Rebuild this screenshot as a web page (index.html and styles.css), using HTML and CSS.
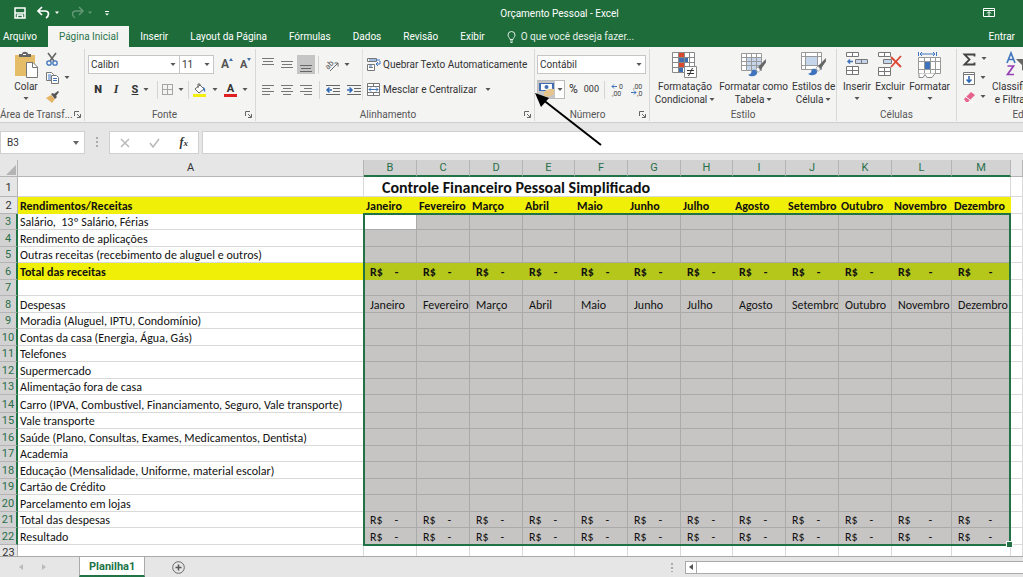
FILE: index.html
```html
<!DOCTYPE html>
<html lang="pt-BR">
<head>
<meta charset="utf-8">
<title>Orçamento Pessoal - Excel</title>
<link rel="stylesheet" href="styles.css">
</head>
<body>
<svg class="sprite" aria-hidden="true">
  <symbol id="down" viewBox="0 0 6 4"><path d="M.5 0h5L3 3z" fill="#555"/></symbol>
  <symbol id="launch" viewBox="0 0 7 7"><path d="M.5 5V.5H5M3 3l3 3M6.5 3v3.5H3" fill="none" stroke="#666"/></symbol>
  <symbol id="brush" viewBox="0 0 18 18"><path d="M17 1 10 8l2 3 5-7z" fill="#666"/><path d="M10 8 8 10l2 3 2-2z" fill="#fff" stroke="#888" stroke-width=".6"/><path d="M1 15q3 0 3-3c1-3 6-1 5 2-1 3-6 3-8 1z" fill="#3f74bd"/></symbol>
</svg>

<header class="titlebar">
  <div class="quick">
    <button aria-label="Salvar"><svg width="12" height="12" viewBox="0 0 12 12"><path d="M1 1h10v10H1zM1 6h10M3.500 11V8h5v3" fill="none" stroke="#fff" stroke-width="1.500"/></svg></button>
    <button aria-label="Desfazer"><svg width="13" height="12" viewBox="0 0 13 12"><path d="M5 0 1 4l4 4M1.500 4H8c5 0 4 5 1 7" fill="none" stroke="#fff" stroke-width="1.700"/></svg><svg width="6" height="4" viewBox="0 0 6 4"><path d="M1 .5h4L3 3z" fill="#fff"/></svg></button>
    <button aria-label="Refazer" class="faded"><svg width="13" height="12" viewBox="0 0 13 12"><path d="m8 0 4 4-4 4M11.500 4H5C0 4 1 9 4 11" fill="none" stroke="#fff" stroke-width="1.500"/></svg><svg width="6" height="4" viewBox="0 0 6 4"><path d="M1 .5h4L3 3z" fill="#fff"/></svg></button>
    <button aria-label="Personalizar"><svg width="6" height="7" viewBox="0 0 6 7"><path d="M1 1.500h4" stroke="#fff"/><path d="M1 3.500h4l-2 2z" fill="#fff"/></svg></button>
  </div>
  <h1>Orçamento Pessoal - Excel</h1>
  <button class="display" aria-label="Opções de exibição"><svg width="12" height="10" viewBox="0 0 12 10"><path d="M.5.5h11v8H.5zM.5 2.500h11M6 8V4M4 5.500l2-2 2 2" fill="none" stroke="#fff"/></svg></button>
</header>

<nav class="tabs">
  <button class="file">Arquivo</button>
  <button class="active">Página Inicial</button>
  <button>Inserir</button>
  <button>Layout da Página</button>
  <button>Fórmulas</button>
  <button>Dados</button>
  <button>Revisão</button>
  <button>Exibir</button>
  <button class="tell"><svg width="9" height="12" viewBox="0 0 9 12"><path d="M3 8.500C3 7 1 6 1 4a3.500 3.500 0 0 1 7 0c0 2-2 3-2 4.500zM3 10h3M3.500 11.500h2" fill="none" stroke="#dcebe1"/></svg>O que você deseja fazer...</button>
  <button class="enter">Entrar</button>
</nav>

<section class="ribbon">
  <div class="group clipboard">
    <div class="body">
      <button class="big">
        <svg width="24" height="26" viewBox="0 0 24 26"><path d="M1 3h20v21H1z" fill="#e5bd69"/><path d="M5 5V2h3c0-3 6-3 6 0h3v3z" fill="#666"/><path d="M9 2h3v1H9z" fill="#fff"/><path d="M12.500 10.500H19l4.500 4.500v10.500h-11z" fill="#fff" stroke="#777"/><path d="M18.500 10.500v5h5" fill="none" stroke="#777"/></svg>
        <span>Colar</span><svg class="d"><use href="#down"/></svg>
      </button>
      <div class="stack">
        <button aria-label="Recortar"><svg width="12" height="13" viewBox="0 0 12 13"><path d="m2 0 6 8M10 0 4 8" stroke="#666" stroke-width="1.600"/><g fill="none" stroke="#3f74bd" stroke-width="1.300"><circle cx="3" cy="10" r="2.200"/><circle cx="9" cy="10" r="2.200"/></g></svg></button>
        <button aria-label="Copiar"><svg width="13" height="12" viewBox="0 0 13 12"><path d="M.5.500h5l2 2v6h-7z" fill="#fff" stroke="#777"/><path d="M2 3h3M2 5h3M2 7h3" stroke="#3f74bd"/><path d="M5.500 3.500h5l2 2v6h-7z" fill="#fff" stroke="#777"/><path d="M7 6.500h4M7 8.500h4" stroke="#3f74bd"/></svg><svg class="d"><use href="#down"/></svg></button>
        <button aria-label="Pincel"><svg width="13" height="12" viewBox="0 0 13 12"><path d="m0 7 5-3 4 4-3 4z" fill="#e5b566"/><path d="m5 3 2-1 4 4-2 2zM8 3l4-3 1 1-3 4z" fill="#555"/></svg></button>
      </div>
    </div>
    <footer><span>Área de Transf...</span><button aria-label="Mais: área de transferência"><svg width="7" height="7"><use href="#launch"/></svg></button></footer>
  </div>

  <div class="group font">
    <div class="body rows">
      <div class="row">
        <label class="combo name"><input aria-label="Fonte" value="Calibri"><svg class="d"><use href="#down"/></svg></label>
        <label class="combo size"><input aria-label="Tamanho" value="11"><svg class="d"><use href="#down"/></svg></label>
        <button class="grow" aria-label="Aumentar fonte"><b>A</b><svg width="4" height="3" viewBox="0 0 4 3"><path d="M0 3h4L2 0z" fill="#3f6fae"/></svg></button>
        <button class="grow less" aria-label="Diminuir fonte"><b>A</b><svg width="4" height="3" viewBox="0 0 4 3"><path d="M0 0h4L2 3z" fill="#3f6fae"/></svg></button>
      </div>
      <div class="row format">
        <button class="glyph"><b>N</b></button>
        <button class="glyph"><i>I</i></button>
        <button class="glyph"><u>S</u><svg class="d"><use href="#down"/></svg></button>
        <span class="sep"></span>
        <button aria-label="Bordas"><svg width="11" height="11" viewBox="0 0 11 11"><path d="M.5 0v11M5.500 0v11M10.500 0v11M0 .5h11M0 5.500h11M0 10.500h11" stroke="#a5a5a5"/></svg><svg class="d"><use href="#down"/></svg></button>
        <span class="sep"></span>
        <button aria-label="Cor de preenchimento"><svg width="14" height="14" viewBox="0 0 14 14"><path d="m2 6 5-4 4 4-5 4z" fill="#fff" stroke="#666"/><path d="M5 5V1h2v2" fill="none" stroke="#666"/><path d="M10 4q3 1 2 5-2-1-2-5" fill="#3f74bd"/><path d="M0 11h13v3H0z" fill="#f5ef10"/></svg><svg class="d"><use href="#down"/></svg></button>
        <button class="color" aria-label="Cor da fonte"><b>A</b><svg class="d"><use href="#down"/></svg></button>
      </div>
    </div>
    <footer><span>Fonte</span><button aria-label="Mais: fonte"><svg width="7" height="7"><use href="#launch"/></svg></button></footer>
  </div>

  <div class="group align">
    <div class="body">
      <div class="rows left">
        <div class="row">
          <button aria-label="Em cima"><svg width="12" height="14" viewBox="0 0 12 14"><path d="M0 .5h12M1 3.500h10M0 6.500h12" stroke="#777"/></svg></button>
          <button aria-label="No meio"><svg width="12" height="14" viewBox="0 0 12 14"><path d="M0 3.500h12M1 6.500h10M0 9.500h12" stroke="#777"/></svg></button>
          <button class="on" aria-label="Embaixo"><svg width="12" height="14" viewBox="0 0 12 14"><path d="M0 7.500h12M1 10.500h10M0 13.500h12" stroke="#666"/></svg></button>
          <span class="sep"></span>
          <button aria-label="Orientação"><svg width="15" height="14" viewBox="0 0 15 14"><text x="0" y="9" transform="rotate(-45 5 7)" class="ab">ab</text><path d="m5 13 8-8M9.500 5H13v3.500" fill="none" stroke="#666"/></svg><svg class="d"><use href="#down"/></svg></button>
        </div>
        <div class="row">
          <button aria-label="À esquerda"><svg width="12" height="12" viewBox="0 0 12 12"><path d="M0 1.500h12M0 4.500h8M0 7.500h12M0 10.500h8" stroke="#777"/></svg></button>
          <button aria-label="Centro"><svg width="12" height="12" viewBox="0 0 12 12"><path d="M0 1.500h12M2 4.500h8M0 7.500h12M2 10.500h8" stroke="#777"/></svg></button>
          <button aria-label="À direita"><svg width="12" height="12" viewBox="0 0 12 12"><path d="M0 1.500h12M4 4.500h8M0 7.500h12M4 10.500h8" stroke="#777"/></svg></button>
          <span class="sep"></span>
          <button aria-label="Diminuir recuo"><svg width="14" height="12" viewBox="0 0 14 12"><path d="M0 1.500h14M7 4.500h7M7 7.500h7M0 10.500h14" stroke="#666"/><path d="M6 6H1M3.500 3.500 1 6l2.500 2.500" fill="none" stroke="#2f68b5" stroke-width="1.500"/></svg></button>
          <button aria-label="Aumentar recuo"><svg width="14" height="12" viewBox="0 0 14 12"><path d="M0 1.500h14M7 4.500h7M7 7.500h7M0 10.500h14" stroke="#666"/><path d="M0 6h5M2.500 3.500 5 6 2.500 8.500" fill="none" stroke="#2f68b5" stroke-width="1.500"/></svg></button>
        </div>
      </div>
      <div class="rows right">
        <div class="row"><button><svg width="14" height="13" viewBox="0 0 14 13"><path d="M.5.5h9v3h-9zM.5 6.500h7v6h-7zM2 9.500h4" fill="#fff" stroke="#777"/><path d="M2 2h11M2 8h3" stroke="#3f74bd"/><path d="M13 3v3H9M11 4 9 6l2 2" fill="none" stroke="#3f74bd"/></svg>Quebrar Texto Automaticamente</button></div>
        <div class="row"><button><svg width="14" height="13" viewBox="0 0 14 13"><path d="M.5.5h12v12H.5zM.5 3.500h12M.5 9.500h12M6.500.5v3M6.500 9.500v3" fill="#fff" stroke="#777"/><path d="M2 6.500h9M4 4.500l-2 2 2 2M9 4.500l2 2-2 2" fill="none" stroke="#3f74bd"/></svg>Mesclar e Centralizar<svg class="d far"><use href="#down"/></svg></button></div>
      </div>
    </div>
    <footer><span>Alinhamento</span><button aria-label="Mais: alinhamento"><svg width="7" height="7"><use href="#launch"/></svg></button></footer>
  </div>

  <div class="group number">
    <div class="body rows">
      <div class="row"><label class="combo"><input aria-label="Formato de número" value="Contábil"><svg class="d"><use href="#down"/></svg></label></div>
      <div class="row">
        <button class="money" aria-label="Formato contábil"><svg width="17" height="17" viewBox="0 0 17 17"><path d="M0 0h17v17H0z" fill="#c5c5c5"/><path d="M1 2h15v8H1z" fill="#3f6fb0"/><path d="M3 3h11v6H3z" fill="#fff"/><circle cx="8.500" cy="6" r="2" fill="#3f6fb0"/><path d="M6 11q4-4 10-3v5q-5 4-10 2z" fill="#e5c58d"/></svg><svg class="d"><use href="#down"/></svg></button>
        <button class="pct">%</button>
        <button class="zeros">000</button>
        <span class="sep"></span>
        <button aria-label="Aumentar casas"><svg width="13" height="13" viewBox="0 0 13 13"><path d="M6 3.500H1M3 1.500l-2 2 2 2" fill="none" stroke="#3f74bd"/><text x="8" y="6" class="dig">0</text><text x="1" y="13" class="dig">,00</text></svg></button>
        <button aria-label="Diminuir casas"><svg width="13" height="13" viewBox="0 0 13 13"><path d="M0 9.500h5M3 7.500l2 2-2 2" fill="none" stroke="#3f74bd"/><text x="2" y="6" class="dig">,00</text><text x="6" y="13" class="dig">,0</text></svg></button>
      </div>
    </div>
    <footer><span>Número</span><button aria-label="Mais: número"><svg width="7" height="7"><use href="#launch"/></svg></button></footer>
  </div>

  <div class="group style">
    <div class="body">
      <button class="big"><svg width="26" height="26" viewBox="0 0 26 26"><path d="M.5.5h22v20H.5z" fill="#fff"/><path d="M7 1h5v4H7zM7 11h5v4H7z" fill="#d9482b"/><path d="M7 6h9v4H7zM7 16h4v4H7z" fill="#3f6fb0"/><path d="M.5.5h22v20H.5zM.5 5.500h22M.5 10.500h22M.5 15.500h22M6.500.5v20M12.500.5v20M17.500.5v20" fill="none" stroke="#888"/><path d="M12.500 14.500h12v11h-12z" fill="#fff" stroke="#888"/><path d="M15 18.500h7M15 21.500h7M20.500 16l-4 8" stroke="#333"/></svg><span>Formatação<br>Condicional<svg class="d"><use href="#down"/></svg></span></button>
      <button class="big"><svg width="26" height="26" viewBox="0 0 26 26"><path d="M.5 1.500h20v17H.5z" fill="#fff"/><path d="M5 6h15v12H5z" fill="#c5d5eb"/><path d="M.5 1.500h20v17H.5zM.5 5.500h20M.5 9.500h20M.5 13.500h20M5.500 1.500v17M10.500 1.500v17M15.500 1.500v17" fill="none" stroke="#999"/><use href="#brush" x="6" y="6" width="20" height="20"/></svg><span>Formatar como<br>Tabela<svg class="d"><use href="#down"/></svg></span></button>
      <button class="big"><svg width="26" height="26" viewBox="0 0 26 26"><path d="M.5.5h20v17H.5zM.5 4.500h20M.5 13.500h20M4.500.5v17M16.500.5v17" fill="#fff" stroke="#999"/><path d="M5 5h11v8H5z" fill="#c5d5eb"/><use href="#brush" x="6" y="5" width="20" height="20"/></svg><span>Estilos de<br>Célula<svg class="d"><use href="#down"/></svg></span></button>
    </div>
    <footer><span>Estilo</span></footer>
  </div>

  <div class="group cells">
    <div class="body">
      <button class="big"><svg width="22" height="26" viewBox="0 0 22 26"><path d="M.5.5h12v4H.5zM6.500.5v4M.5 14.500h12v8H.5zM.5 18.500h12M6.500 14.500v8" fill="#fff" stroke="#777"/><path d="M9.500 7.500h12v4h-12zM15.500 7.500v4" fill="#c5d5eb" stroke="#777"/><path d="M7 9.500H2M4 7.500l-2 2 2 2" fill="none" stroke="#3f74bd" stroke-width="1.500"/></svg><span>Inserir</span><svg class="d"><use href="#down"/></svg></button>
      <button class="big"><svg width="24" height="26" viewBox="0 0 24 26"><path d="M.5.500h12v4H.5zM6.500.5v4M.5 15.500h12v8H.5zM.5 19.500h12M6.500 15.500v8" fill="#fff" stroke="#777"/><path d="M5.500 7.500h8v4h-8z" fill="#c5d5eb" stroke="#777"/><path d="m13 5 10 10M23 4 13 15" stroke="#dc4632" stroke-width="1.800"/></svg><span>Excluir</span><svg class="d"><use href="#down"/></svg></button>
      <button class="big"><svg width="24" height="26" viewBox="0 0 24 26"><path d="M.5 0v4M18.500 0v4M2 2h15M4 0 2 2l2 2M15 0l2 2-2 2" fill="none" stroke="#3f74bd"/><path d="M.5 5.500h22v16H.5zM.5 9.500h22M.5 17.500h22M6.500 5.500v16M12.500 5.500v16M17.500 5.500v16" fill="#fff" stroke="#999"/><path d="M7 10h5v7H7z" fill="#3f74bd"/><path d="M1 21.500v4h4l2-3 2 3h5l3-4" fill="#fff" stroke="#888"/></svg><span>Formatar</span><svg class="d"><use href="#down"/></svg></button>
    </div>
    <footer><span>Células</span></footer>
  </div>

  <div class="group edit">
    <div class="body">
      <div class="stack">
        <button aria-label="Soma"><svg width="13" height="13" viewBox="0 0 13 13"><path d="M11.500 3.500V1.500H1.500l5 5-5 5h10V9.500" fill="none" stroke="#444" stroke-width="1.800"/></svg><svg class="d"><use href="#down"/></svg></button>
        <button aria-label="Preencher"><svg width="12" height="13" viewBox="0 0 12 13"><path d="M.5.5h11v12H.5zM.5 2.500h11" fill="#fff" stroke="#777"/><path d="M6 4v6M3.500 7.500 6 10l2.500-2.500" fill="none" stroke="#2f68b5" stroke-width="1.600"/></svg><svg class="d"><use href="#down"/></svg></button>
        <button aria-label="Limpar"><svg width="12" height="12" viewBox="0 0 12 12"><path d="m1 8 7-7 4 3-7 7H3z" fill="#e8638c"/><path d="m3 6 4 3M4 11.500h7" stroke="#fff"/></svg><svg class="d"><use href="#down"/></svg></button>
      </div>
      <button class="big"><svg width="36" height="26" viewBox="0 0 36 26"><path d="m10 11 4-10 4 10M11.500 7.500h5" fill="none" stroke="#3f74bd" stroke-width="1.600"/><path d="M10.500 14h6l-6 8.500H17" fill="none" stroke="#9440b4" stroke-width="1.700"/><path d="M19 7h16l-6 6v7l-4-2v-5z" fill="#666"/></svg><span>Classificar<br>e Filtrar<svg class="d"><use href="#down"/></svg></span></button>
    </div>
    <footer><span>Edição</span></footer>
  </div>
</section>

<section class="formula">
  <label class="cellname"><input aria-label="Caixa de nome" value="B3"><svg width="6" height="4" viewBox="0 0 6 4"><path d="M0 0h6L3 4z" fill="#666"/></svg></label>
  <span class="grip"></span>
  <div class="fx">
    <button aria-label="Cancelar"><svg width="10" height="10" viewBox="0 0 10 10"><path d="m1 1 8 8M9 1 1 9" stroke="#b9b9b9" stroke-width="1.500"/></svg></button>
    <button aria-label="Inserir"><svg width="11" height="10" viewBox="0 0 11 10"><path d="m1 5 3 4 6-8" fill="none" stroke="#b9b9b9" stroke-width="1.600"/></svg></button>
    <button class="fn"><i>f</i><i>x</i></button>
  </div>
  <input class="entry" aria-label="Barra de fórmulas">
</section>

<main class="sheet">
  <table>
    <colgroup><col class="num"><col class="wide"><col span="3" class="m"><col class="s"><col span="2" class="m"><col class="s"><col span="3" class="m"><col class="l"><col class="m last"><col></colgroup>
    <thead><tr><th class="corner"><svg width="10" height="10" viewBox="0 0 10 10"><path d="M10 0v10H0z" fill="#b4b4b4"/></svg></th><th class="plain">A</th><th>B<th>C<th>D<th>E<th>F<th>G<th>H<th>I<th>J<th>K<th>L<th>M<th class="plain"></tr></thead>
    <tbody>
      <tr class="title"><th>1<td><td colspan="12"><span>Controle Financeiro Pessoal Simplificado</span><td></tr>
      <tr class="yellow head"><th>2<td>Rendimentos/Receitas<td>Janeiro<td>Fevereiro<td>Março<td>Abril<td>Maio<td>Junho<td>Julho<td>Agosto<td>Setembro<td>Outubro<td>Novembro<td>Dezembro<td></tr>
    </tbody>
    <tbody class="sel">
      <tr><th>3<td>Salário,&nbsp; 13º Salário, Férias
        <td class="cursor"><td><td> <td><td><td> <td><td><td> <td><td><td> <td></tr>
      <tr><th>4<td>Rendimento de aplicações
        <td><td><td> <td><td><td> <td><td><td> <td><td><td> <td></tr>
      <tr><th>5<td>Outras receitas (recebimento de aluguel e outros)
        <td><td><td> <td><td><td> <td><td><td> <td><td><td> <td></tr>
      <tr class="yellow cash"><th>6<td>Total das receitas<td>R$<s>-</s><td>R$<s>-</s><td>R$<s>-</s><td>R$<s>-</s><td>R$<s>-</s><td>R$<s>-</s><td>R$<s>-</s><td>R$<s>-</s><td>R$<s>-</s><td>R$<s>-</s><td>R$<s>-</s><td>R$<s>-</s><td></tr>
      <tr><th>7<td>
        <td><td><td> <td><td><td> <td><td><td> <td><td><td> <td></tr>
      <tr><th>8<td>Despesas<td>Janeiro<td>Fevereiro<td>Março<td>Abril<td>Maio<td>Junho<td>Julho<td>Agosto<td>Setembro<td>Outubro<td>Novembro<td>Dezembro<td></tr>
      <tr><th>9<td>Moradia (Aluguel, IPTU, Condomínio)
        <td><td><td> <td><td><td> <td><td><td> <td><td><td> <td></tr>
      <tr><th>10<td>Contas da casa (Energia, Água, Gás)
        <td><td><td> <td><td><td> <td><td><td> <td><td><td> <td></tr>
      <tr><th>11<td>Telefones
        <td><td><td> <td><td><td> <td><td><td> <td><td><td> <td></tr>
      <tr><th>12<td>Supermercado
        <td><td><td> <td><td><td> <td><td><td> <td><td><td> <td></tr>
      <tr><th>13<td>Alimentação fora de casa
        <td><td><td> <td><td><td> <td><td><td> <td><td><td> <td></tr>
      <tr class="tall"><th>14<td>Carro (IPVA, Combustível, Financiamento, Seguro, Vale transporte)
        <td><td><td> <td><td><td> <td><td><td> <td><td><td> <td></tr>
      <tr><th>15<td>Vale transporte
        <td><td><td> <td><td><td> <td><td><td> <td><td><td> <td></tr>
      <tr><th>16<td>Saúde (Plano, Consultas, Exames, Medicamentos, Dentista)
        <td><td><td> <td><td><td> <td><td><td> <td><td><td> <td></tr>
      <tr><th>17<td>Academia
        <td><td><td> <td><td><td> <td><td><td> <td><td><td> <td></tr>
      <tr><th>18<td>Educação (Mensalidade, Uniforme, material escolar)
        <td><td><td> <td><td><td> <td><td><td> <td><td><td> <td></tr>
      <tr><th>19<td>Cartão de Crédito
        <td><td><td> <td><td><td> <td><td><td> <td><td><td> <td></tr>
      <tr><th>20<td>Parcelamento em lojas
        <td><td><td> <td><td><td> <td><td><td> <td><td><td> <td></tr>
      <tr class="cash"><th>21<td>Total das despesas<td>R$<s>-</s><td>R$<s>-</s><td>R$<s>-</s><td>R$<s>-</s><td>R$<s>-</s><td>R$<s>-</s><td>R$<s>-</s><td>R$<s>-</s><td>R$<s>-</s><td>R$<s>-</s><td>R$<s>-</s><td>R$<s>-</s><td></tr>
      <tr class="cash"><th>22<td>Resultado<td>R$<s>-</s><td>R$<s>-</s><td>R$<s>-</s><td>R$<s>-</s><td>R$<s>-</s><td>R$<s>-</s><td>R$<s>-</s><td>R$<s>-</s><td>R$<s>-</s><td>R$<s>-</s><td>R$<s>-</s><td>R$<s>-</s><td></tr>
    </tbody>
    <tbody><tr><th>23<td>
        <td><td><td> <td><td><td> <td><td><td> <td><td><td> <td></tr></tbody>
  </table>
  <div class="selection"></div>
</main>

<footer class="bottom">
  <div class="arrows"><button aria-label="Anterior"><svg width="4" height="6" viewBox="0 0 4 6"><path d="M4 0v6L0 3z" fill="#bbb"/></svg></button><button aria-label="Próxima"><svg width="4" height="6" viewBox="0 0 4 6"><path d="M0 0v6l4-3z" fill="#bbb"/></svg></button></div>
  <button class="sheettab">Planilha1</button>
  <button class="add" aria-label="Nova planilha"><svg width="13" height="13" viewBox="0 0 13 13"><circle cx="6.500" cy="6.500" r="5.800" fill="none" stroke="#666"/><path d="M6.500 3.500v6M3.500 6.500h6" stroke="#555" stroke-width="1.500"/></svg></button>
  <div class="hscroll"><span class="grip"></span><button aria-label="Rolar à esquerda"><svg width="4" height="6" viewBox="0 0 4 6"><path d="M4 0v6L0 3z" fill="#555"/></svg></button><span class="track"></span></div>
</footer>

<svg class="pointer" width="70" height="56" viewBox="0 0 70 56" aria-hidden="true"><path d="M8 6 67 52" stroke="#000" stroke-width="2"/><path d="m1 0 14 5-8 9z"/></svg>
</body>
</html>
```
FILE: styles.css
```css
* { box-sizing: border-box; }
body { margin: 0; height: 100vh; overflow: hidden; display: flex; flex-direction: column; position: relative; background: #e6e6e6; color: #333; font: 10px/13px Roboto, "Open Sans", sans-serif; }
button, input { font: inherit; color: inherit; background: none; border: 0; padding: 0; margin: 0; }
button { display: flex; align-items: center; white-space: nowrap; }
svg { flex: none; display: block; overflow: visible; }
.sprite { position: absolute; width: 0; height: 0; }
.d { width: 6px; height: 4px; }

.titlebar { flex: none; height: 26px; background: #1e6c3a; color: #fff; display: grid; grid-template-columns: 1fr auto 1fr; align-items: center; padding: 0 28px 0 14px; }
.titlebar h1 { margin: 0; font-size: 10px; font-weight: 400; padding-left: 110px; }
.quick { display: flex; gap: 11px; height: 19px; align-items: center; }
.quick button { gap: 3px; }
.quick button:nth-child(2) { gap: 4px; }
.quick .faded { opacity: .3; }
.display { justify-self: end; height: 19px; }

.tabs { flex: none; height: 21px; background: #1e6c3a; color: #fff; display: flex; }
.tabs button { padding: 0 11px; }
.tabs .file { padding: 0 11px 0 3px; }
.tabs .active { background: #f4f4f3; color: #2b7549; }
.tabs .tell { gap: 5px; color: #e4f0e8; }
.tabs .enter { margin-left: auto; padding-right: 8px; }

.ribbon { flex: none; height: 76px; background: #f4f4f3; border-bottom: 1px solid #cfcfcf; display: flex; overflow: hidden; }
.group { flex: none; display: flex; flex-direction: column; margin: 2px 0 1px; border-right: 1px solid #d8d8d8; }
.body { height: 58px; display: flex; }
.group footer { flex: 1; display: flex; justify-content: center; align-items: center; position: relative; color: #555; white-space: nowrap; padding: 2px 14px 0 0; }
.group footer span:last-child { padding-left: 14px; }
.group footer button { position: absolute; right: 3px; top: 5px; }
.rows { display: flex; flex-direction: column; gap: 6px; padding-top: 6px; }
.row { display: flex; align-items: center; height: 19px; }
.sep { width: 1px; height: 18px; background: #d5d5d5; }
.big { flex-direction: column; text-align: center; padding-top: 3px; gap: 2px; }
.big .d { margin: 2px auto 0; }
.big span .d { display: inline-block; vertical-align: middle; margin: 0 0 0 2px; }
.stack { display: flex; flex-direction: column; justify-content: space-between; padding: 3px 0 2px; }
.stack button { gap: 5px; height: 14px; }
.combo { display: flex; align-items: center; height: 19px; background: #fff; border: 1px solid #c6c6c6; padding: 0 3px 0 2px; }
.combo input { flex: 1; width: 0; min-width: 0; }

.clipboard { width: 85px; }
.clipboard .big { padding-left: 14px; }
.clipboard .stack { padding-left: 8px; }
.clipboard footer { justify-content: flex-start; }
.font { width: 171px; padding-left: 3px; }
.font .name { width: 92px; }
.font .size { width: 35px; margin-left: -1px; }
.grow { margin-left: 7px; align-items: flex-start; font-size: 12px; color: #555; }
.less { font-size: 11px; }
.format { padding-left: 4px; gap: 6px; }
.format .sep { margin: 0 -2px; }
.format button { gap: 5px; }
.format .glyph { width: 12px; justify-content: center; font-size: 11px; color: #333; font-weight: 700; }
.format .glyph:nth-child(3) { width: 25px; }
.glyph i { font-family: "Liberation Serif", serif; font-size: 12px; }
.color b { width: 13px; font-size: 11px; border-bottom: 3px solid #e02020; line-height: 11px; }
.align { width: 279px; }
.left { width: 106px; padding-left: 3px; }
.left .row { gap: 3px; }
.left .row button { height: 19px; padding: 0 1px 0 3px; gap: 4px; }
.left .row .on { background: #c5c5c5; padding: 0 3px; }
.left .row + .row .sep { margin-left: 3px; }
.right { border-left: 1px solid #e0e0e0; margin-bottom: 6px; padding-left: 4px; }
.right button { gap: 2px; }
.far { margin-left: 6px; }
.ab { font: 8px Roboto, sans-serif; fill: #555; }
.dig { font: 7px Roboto, sans-serif; fill: #444; }
.number { width: 115px; padding: 0 3px 0 2px; }
.number .combo { flex: 1; }
.money { border: 1px solid #bbb; background: #fff; width: 28px; height: 19px; gap: 2px; }
.pct { font-size: 12px; margin-left: 4px; }
.zeros { font-size: 9px; margin-left: 6px; }
.number .sep { margin: 0 6px 0 5px; }
.number .sep + button { margin-right: 7px; }
.group.number footer { padding-right: 8px; }
.number footer button { right: 0; }
.style { width: 187px; }
.style .body { padding-left: 5px; gap: 4px; }
.style .big:first-child { width: 60px; }
.style .big:nth-child(2) { width: 69px; }
.cells { width: 120px; }
.cells .body { justify-content: space-between; padding: 0 6px; }
.edit { width: 142px; }
.edit .stack { padding-left: 6px; }
.edit .big { padding-left: 5px; }

.formula { flex: none; display: flex; align-items: stretch; height: 23px; margin: 8px 0 6px; }
.cellname { display: flex; align-items: center; width: 85px; background: #fff; border: 1px solid #d0d0d0; padding: 0 5px 0 6px; }
.cellname input { flex: 1; width: 0; min-width: 0; }
.grip { width: 2px; margin: 6px 11px; background: repeating-linear-gradient(#aaa 0 2px, transparent 2px 4px); }
.fx { display: flex; justify-content: space-between; width: 90px; margin-right: 3px; padding: 0 10px; background: #fff; border: 1px solid #d0d0d0; }
.fn { font: 700 12px "Liberation Serif", serif; }
.fn i + i { font-size: 9px; }
.entry { flex: 1; background: #fff; border: 1px solid #d0d0d0; border-right: 0; }

.sheet { flex: 1; min-height: 0; overflow: hidden; position: relative; background: #fff; font-family: Carlito, Lato, sans-serif; font-size: 12px; line-height: 14px; color: #111; }
table { width: 100%; table-layout: fixed; border-collapse: separate; border-spacing: 0; }
.num { width: 18px; }
.wide { width: 346px; }
.m { width: 53px; }
.s { width: 52px; }
.l { width: 60px; }
.m.last { width: 59px; }
td, th { padding: 1px 0 0 2px; height: 16px; overflow: hidden; white-space: nowrap; text-align: left; vertical-align: middle; border: solid #d9d9d9; border-width: 0 1px 1px 0; }
tbody tr:nth-child(even) > * { height: 17px; }
tbody tr.tall > * { height: 18px; padding-top: 3px; }
thead th { height: 17px; padding: 0; text-align: center; font: 11px/14px Roboto, sans-serif; background: #d2d2d2; color: #2a6f49; border-color: #b5b5b5; border-bottom: 2px solid #217346; }
thead .plain, thead .corner { background: #e6e6e6; color: #333; border-bottom: 1px solid #b5b5b5; }
.corner svg { margin: 3px 0 0 6px; }
tbody th { background: #e6e6e6; padding-left: 0; text-align: center; font: 11px/14px Roboto, sans-serif; color: #333; border-color: #b5b5b5; }
.sel th { background: #d2d2d2; color: #2a6f49; border-right: 2px solid #217346; }
.sel td:nth-child(n+3):nth-child(-n+14) { background: #c6c5c4; border-color: #aaa; padding-left: 6px; }
.sel td.cursor:nth-child(3) { background: #fff; }
tbody tr.title > * { height: 20px; padding-top: 3px; }
tbody tr.title td:nth-child(3) { font-size: 16px; line-height: 16px; font-weight: 700; padding-left: 18px; }
.yellow td { background: #efef08; border-color: #efef08; font-weight: 700; }
.yellow td:last-child { background: #fff; border-color: #d9d9d9; }
.head td { overflow: visible; }
.sel .yellow td:nth-child(n+3):nth-child(-n+14) { background: #b5c71b; border-color: #b5c71b; }
s { text-decoration: none; margin-left: 12px; }
.cash td:nth-child(n+13) s { margin-left: 18px; }
.selection { position: absolute; left: 363px; top: 53px; width: 648px; height: 333px; border: 2px solid #217346; }
.selection::after { content: ""; position: absolute; right: -3px; bottom: -3px; width: 5px; height: 5px; background: #217346; outline: 1px solid #fff; }

.bottom { flex: none; height: 21px; display: flex; border-top: 1px solid #aaa; background: #e6e6e6; }
.arrows { width: 79px; display: flex; gap: 19px; padding-left: 19px; }
.sheettab { background: #fff; border: solid #aaa; border-width: 0 1px; border-bottom: 2px solid #217346; padding: 0 9px; color: #217346; font-size: 11px; font-weight: 700; }
.add { margin-left: 27px; }
.hscroll { flex: 0 0 352px; margin-left: auto; display: flex; align-items: center; }
.hscroll .grip { height: 9px; margin: 0 12px 0 0; }
.hscroll button { width: 12px; height: 13px; background: #fff; border: 1px solid #aaa; justify-content: center; }
.track { flex: 1; height: 13px; background: #fff; border: solid #aaa; border-width: 1px 0; }
.pointer { position: absolute; left: 534px; top: 93px; }
```
